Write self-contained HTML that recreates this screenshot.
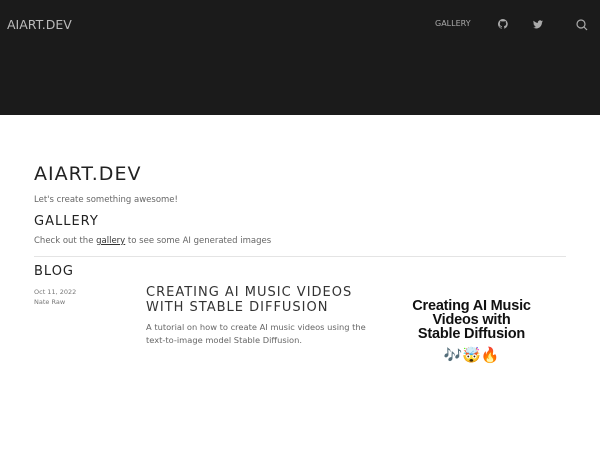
<!DOCTYPE html>
<html><head><meta charset="utf-8"><style>
*{margin:0;padding:0;box-sizing:border-box}
body{width:600px;height:450px;background:#fff;font-family:"DejaVu Sans","Liberation Sans",sans-serif;color:#222;position:relative;overflow:hidden}
.hdr{position:absolute;left:0;top:0;width:600px;height:115px;background:#1b1b1b}
.abs{position:absolute;white-space:nowrap}
.t{letter-spacing:1px}
</style></head><body>
<div class="hdr"></div>
<div class="abs" style="left:7px;top:17px;font-size:12.5px;color:#bbb">AIART.DEV</div>
<div class="abs" style="left:435px;top:19px;font-size:8px;color:#aaa">GALLERY</div>
<svg class="abs" style="left:498px;top:19px" width="10" height="10" viewBox="0 0 16 16"><path fill="#aaa" d="M8 0a8 8 0 0 0-2.5 15.6c.4 0 .5-.2.5-.4v-1.5c-2.2.5-2.7-1-2.7-1-.4-.9-.9-1.2-.9-1.2-.7-.5.1-.5.1-.5.8.1 1.2.8 1.2.8.7 1.3 1.9.9 2.300.7.1-.5.3-.9.5-1.1-1.800-.2-3.600-.9-3.600-4 0-.9.3-1.600.8-2.100-.1-.2-.4-1 .1-2.100 0 0 .7-.2 2.200.8a7.600 7.600 0 0 1 4 0c1.500-1 2.200-.8 2.200-.8.4 1.100.2 1.900.1 2.100.5.6.8 1.300.8 2.100 0 3.100-1.900 3.700-3.600 3.900.3.3.5.8.5 1.500v2.200c0 .2.1.5.6.4A8 8 0 0 0 8 0z"/></svg>
<svg class="abs" style="left:533px;top:20px" width="10" height="9" viewBox="0 0 24 20"><path fill="#aaa" d="M24 2.4a10 10 0 0 1-2.8.8A5 5 0 0 0 23.3.4a10 10 0 0 1-3.1 1.2A4.9 4.9 0 0 0 11.8 6 14 14 0 0 1 1.7.9a4.9 4.9 0 0 0 1.5 6.6 5 5 0 0 1-2.2-.6A4.9 4.9 0 0 0 4.9 11.8a5 5 0 0 1-2.2.1 4.9 4.9 0 0 0 4.6 3.4A9.9 9.9 0 0 1 0 17.3 14 14 0 0 0 7.5 19.5c9.1 0 14-7.5 14-14v-.6A10 10 0 0 0 24 2.4z"/></svg>
<svg class="abs" style="left:576px;top:19px" width="12" height="12" viewBox="0 0 12 12"><circle cx="5" cy="5" r="4" fill="none" stroke="#aaa" stroke-width="1.2"/><path d="M8 8l3 3" stroke="#aaa" stroke-width="1.2"/></svg>

<div class="abs t" style="left:34px;top:163px;font-size:19px;color:#222">AIART.DEV</div>
<div class="abs" style="left:34px;top:195px;font-size:8.5px;color:#666">Let's create something awesome!</div>
<div class="abs t" style="left:34px;top:214px;font-size:13px">GALLERY</div>
<div class="abs" style="left:34px;top:236px;font-size:8.5px;color:#666">Check out the <u style="color:#333">gallery</u> to see some AI generated images</div>
<div class="abs" style="left:34px;top:256px;width:532px;height:1px;background:#e4e4e4"></div>
<div class="abs t" style="left:34px;top:264px;font-size:13px">BLOG</div>
<div class="abs" style="left:34px;top:288px;font-size:6.5px;color:#777">Oct 11, 2022</div>
<div class="abs" style="left:34px;top:298px;font-size:6.5px;color:#777">Nate Raw</div>
<div class="abs t" style="left:146px;top:285px;font-size:13px;line-height:15px;color:#333">CREATING AI MUSIC VIDEOS<br>WITH STABLE DIFFUSION</div>
<div class="abs" style="left:146px;top:321px;font-size:8.3px;line-height:13px;color:#666">A tutorial on how to create AI music videos using the<br>text-to-image model Stable Diffusion.</div>
<div class="abs" style="left:399px;top:299px;width:145px;text-align:center;font-family:'Liberation Sans',sans-serif;font-weight:900;font-size:14.5px;line-height:14px;color:#111;letter-spacing:-0.2px">Creating AI Music<br>Videos with<br>Stable Diffusion</div>
<div class="abs" style="left:399px;top:346px;width:145px;text-align:center;font-size:15px">🎶🤯🔥</div>
</body></html>
